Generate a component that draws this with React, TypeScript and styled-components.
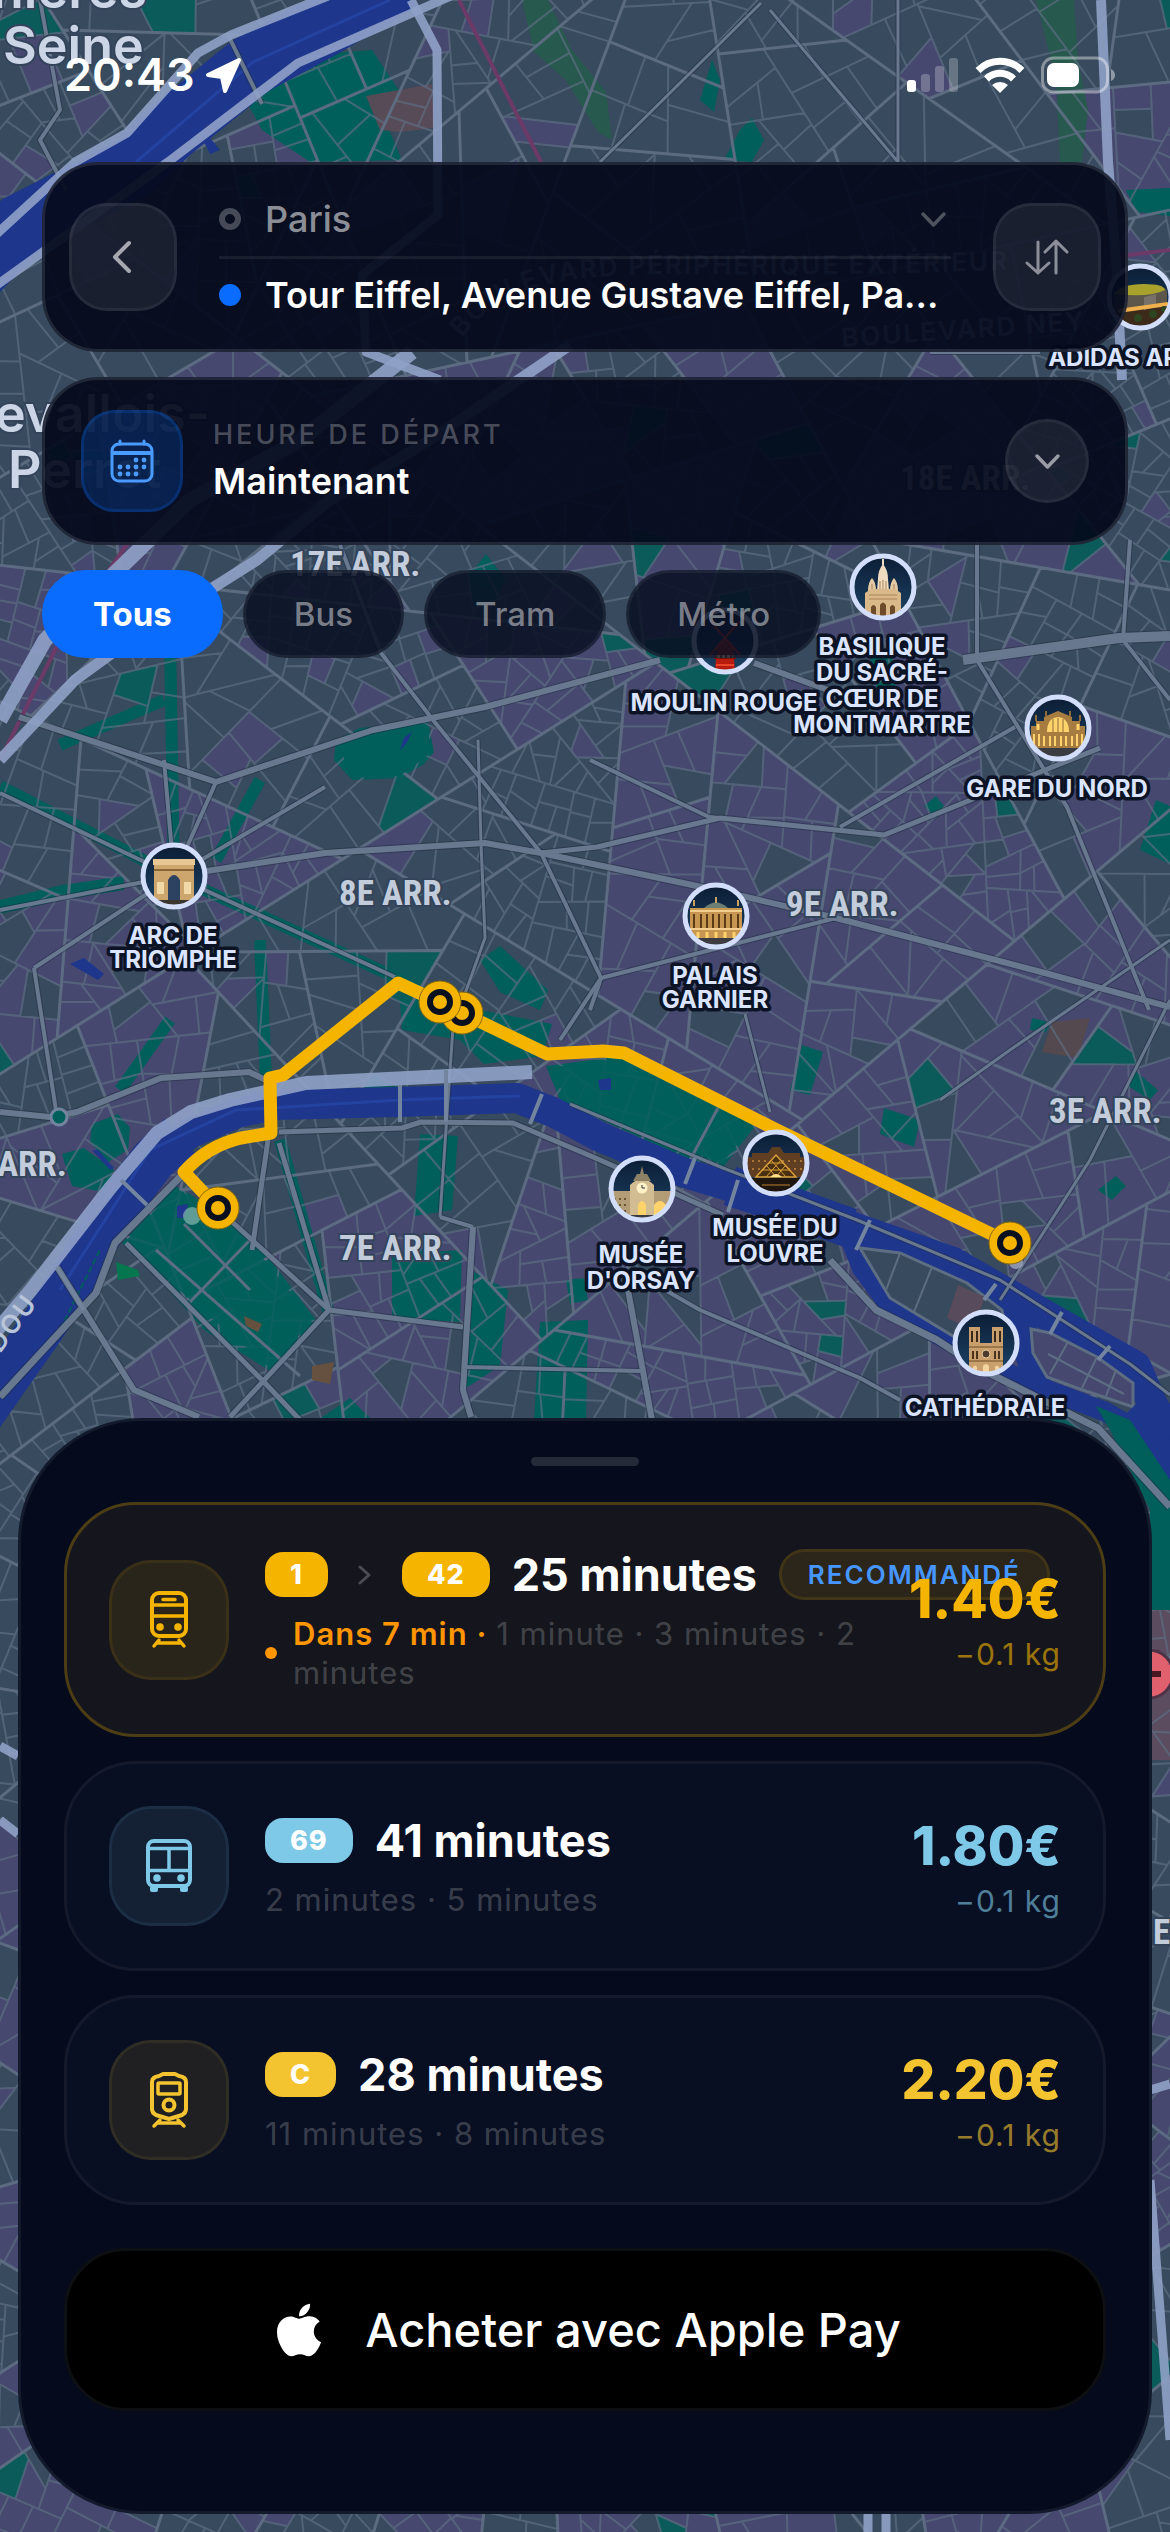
import React, { useState } from "react";
import styled, { createGlobalStyle, css } from "styled-components";
import { FaApple } from "react-icons/fa";

/* ------------------------------------------------------------------ */
/* Theme                                                               */
/* ------------------------------------------------------------------ */

const color = {
  ink: "#050b1c",
  land: "#384a5d",
  quarter: "#464870",
  park: "#015f5b",
  water: "#1e368b",
  street: "#5d6d82",
  avenue: "#73849e",
  express: "#8fa1c6",
  gold: "#f5b400",
  sky: "#7ec8e8",
  amber: "#f4c430",
  orange: "#ff9500",
  blue: "#0a6cff",
};

const GlobalStyle = createGlobalStyle`
  *, *::before, *::after { box-sizing: border-box; }
  body {
    margin: 0;
    background: ${color.land};
    font-family: Inter, "Noto Sans", "Liberation Sans", sans-serif;
    color: #fff;
    -webkit-font-smoothing: antialiased;
  }
  button, input { font: inherit; color: inherit; }
`;

/* ------------------------------------------------------------------ */
/* Street pattern: blocks made by cutting the plane again and again    */
/* ------------------------------------------------------------------ */

type Pt = [number, number];

function makeRandom(seed: number) {
  let a = seed;
  return () => {
    a = (a + 0x6d2b79f5) | 0;
    let t = Math.imul(a ^ (a >>> 15), 1 | a);
    t = (t + Math.imul(t ^ (t >>> 7), 61 | t)) ^ t;
    return ((t ^ (t >>> 14)) >>> 0) / 4294967296;
  };
}

const areaOf = (p: Pt[]) => {
  let s = 0;
  p.forEach(([x, y], i) => {
    const [u, v] = p[(i + 1) % p.length];
    s += x * v - u * y;
  });
  return Math.abs(s / 2);
};

const centreOf = (p: Pt[]): Pt => [
  p.reduce((s, q) => s + q[0], 0) / p.length,
  p.reduce((s, q) => s + q[1], 0) / p.length,
];

function cut(poly: Pt[], at: Pt, nx: number, ny: number): [Pt[], Pt[]] {
  const side = (q: Pt) => (q[0] - at[0]) * nx + (q[1] - at[1]) * ny;
  const a: Pt[] = [];
  const b: Pt[] = [];
  poly.forEach((q, i) => {
    const r = poly[(i + 1) % poly.length];
    const sq = side(q);
    const sr = side(r);
    (sq >= 0 ? a : b).push(q);
    if (sq * sr < 0) {
      const t = sq / (sq - sr);
      const m: Pt = [q[0] + (r[0] - q[0]) * t, q[1] + (r[1] - q[1]) * t];
      a.push(m);
      b.push(m);
    }
  });
  return [a, b];
}

function quarterShare([x, y]: Pt) {
  if (y < 350) return x < 90 ? 0.4 : 0.03;
  if (y < 560) return 0.35;
  if (y < 950) return x > 560 ? 0.42 : 0.38;
  if (y < 1450) return x > 560 ? 0.9 : x < 260 && y < 1080 ? 0.4 : 0.15;
  return 0.35;
}

const ringPath = (p: Pt[]) =>
  "M" + p.map(([x, y]) => `${x.toFixed(1)} ${y.toFixed(1)}`).join("L") + "Z";

function buildStreets() {
  const rnd = makeRandom(75015);
  const quarter: string[] = [];
  const park: string[] = [];
  const minor: string[] = [];
  const middle: string[] = [];

  const visit = (poly: Pt[], limit: number, tone: number) => {
    const area = areaOf(poly);
    const c = centreOf(poly);
    let nextLimit = limit;
    let nextTone = tone;
    if (area < 22000 && tone < 0) {
      nextTone = rnd() < quarterShare(c) ? 1 : 0;
      nextLimit = 650 + rnd() * (c[1] < 400 ? 3600 : 1700);
      middle.push(ringPath(poly));
    }
    if (area < nextLimit) {
      const r = rnd();
      if (r < 0.02) park.push(ringPath(poly));
      else if (nextTone === 1 ? r < 0.88 : r < 0.09) quarter.push(ringPath(poly));
      minor.push(ringPath(poly));
      return;
    }
    let best = 0;
    let dx = 1;
    let dy = 0;
    poly.forEach((q, i) => {
      const s = poly[(i + 1) % poly.length];
      const l = Math.hypot(s[0] - q[0], s[1] - q[1]);
      if (l > best) {
        best = l;
        dx = (s[0] - q[0]) / l;
        dy = (s[1] - q[1]) / l;
      }
    });
    const spread = tone < 0 ? 1.5 : rnd() < 0.22 ? 1.3 : 0.25;
    const turn = (rnd() - 0.5) * spread;
    const nx = dx * Math.cos(turn) - dy * Math.sin(turn);
    const ny = dx * Math.sin(turn) + dy * Math.cos(turn);
    const reach = best * 0.16 * (rnd() - 0.5);
    const [a, b] = cut(poly, [c[0] + dx * reach, c[1] + dy * reach], nx, ny);
    if (a.length < 3 || b.length < 3) return;
    visit(a, nextLimit, nextTone);
    visit(b, nextLimit, nextTone);
  };

  visit([[-40, -40], [1210, -40], [1210, 2572], [-40, 2572]], 1000, -1);
  return {
    quarter: quarter.join(""),
    park: park.join(""),
    minor: minor.join(""),
    middle: middle.join(""),
  };
}

const streets = buildStreets();

/* ------------------------------------------------------------------ */
/* Hand-placed map features                                            */
/* ------------------------------------------------------------------ */

const parks = [
  "M150 128L214 56L262 36L300 40L168 142L134 160Z",
  "M262 78L300 58L345 52L372 50L400 92L384 118L402 160L310 162L262 130L248 104Z",
  "M336 740L360 728L428 722L434 752L424 764L400 778L352 780L334 760Z",
  "M1126 190L1170 188L1170 216L1136 212Z",
  "M0 900L62 885L124 876L124 890L62 900L0 914Z",
  "M92 1124L118 1114L130 1128L128 1150L108 1162L90 1142Z",
  "M62 1154L84 1148L114 1170L104 1192L72 1186Z",
  "M122 1243L176 1186L236 1222L266 1254L316 1320L272 1372L204 1330L160 1280Z",
  "M420 1134L458 1136L452 1210L414 1216Z",
  "M392 1252L424 1252L462 1250L460 1322L392 1318Z",
  "M474 1272L508 1290L500 1366L466 1388Z",
  "M540 1322L588 1320L586 1420L534 1420Z",
  "M400 1000L430 988L480 1010L552 1024L542 1056L484 1064L460 1040L402 1030Z",
  "M546 1066L622 1056L760 1120L724 1166L690 1160L570 1106L560 1100Z",
  "M802 1045L823 1052L810 1095L790 1090Z",
  "M884 1108L920 1120L914 1147L880 1134Z",
  "M1032 1018L1050 1022L1046 1032L1030 1030Z",
  "M1134 1070L1158 1090L1150 1100L1128 1086Z",
  "M1098 1190L1116 1176L1126 1186L1112 1200Z",
  "M480 960L500 946L548 990L540 1010L500 992Z",
  "M566 1280L584 1278L588 1300L570 1304Z",
  "M1140 850L1156 800L1170 806L1170 864Z",
  "M318 1420L350 1398L372 1420Z",
  "M870 655L892 655L896 690L880 706Z",
  "M466 580L486 554L506 580L498 594Z",
  "M924 806L936 796L944 806L936 818Z",
  "M724 160L740 130L752 118L764 140L752 162Z",
  "M700 100L712 60L720 80L714 112Z",
];

const greenAvenues: Pt[][] = [
  [[174, 876], [0, 786]],
  [[174, 876], [395, 977], [484, 1030]],
  [[174, 876], [170, 640]],
  [[260, 780], [216, 860]],
  [[260, 940], [266, 1080]],
  [[170, 1020], [120, 1090]],
  [[164, 700], [60, 745]],
  [[280, 1140], [328, 1310]],
];

const avenues: { w: number; d: string }[] = [
  { w: 7, d: "M19 717L216 782L373 730L485 707L660 660" },
  { w: 7, d: "M754 663L828 690" },
  { w: 11, d: "M963 660L1119 638L1170 636" },
  { w: 5, d: "M340 545L381 653L433 720L541 853L601 978L590 1010" },
  { w: 7, d: "M174 876L325 853L485 843L541 853L716 890L836 918L1045 973L1170 1007" },
  { w: 4, d: "M478 740L481 843L485 938L453 1027L440 1217" },
  { w: 6, d: "M541 853L597 847L720 818L884 835L1045 770L1100 748" },
  { w: 5, d: "M590 760L709 817L720 818" },
  { w: 5, d: "M840 827L1015 727" },
  { w: 5, d: "M977 540L977 660L1067 807L1149 1010" },
  { w: 5, d: "M1130 540L1123 640L1170 700" },
  { w: 5, d: "M174 876L0 793M174 876L0 910M174 876L34 968M174 876L164 760M174 876L216 782M174 876L325 787M174 876L395 977" },
  { w: 5, d: "M836 918L601 978L560 1040" },
  { w: 7, d: "M0 1112L50 1117L77 1112L161 1078L249 1072L272 1083" },
  { w: 5, d: "M34 968L57 1117" },
  { w: 8, d: "M180 1177L115 1243L96 1293L0 1397" },
  { w: 6, d: "M279 1132L402 1128L421 1122L513 1123L600 1160L723 1215" },
  { w: 8, d: "M830 1260L876 1310L937 1340L983 1370L1098 1428L1170 1507" },
  { w: 6, d: "M230 1220L329 1310L463 1327M126 1243L264 1382L300 1420M329 1310L230 1417M279 1143L329 1310M268 1140L252 1250" },
  { w: 7, d: "M473 1227L463 1390L471 1417M57 1267L134 1390L199 1417" },
  { w: 5, d: "M440 1217L473 1227M463 1367L640 1371" },
  { w: 7, d: "M628 1290L652 1420" },
  { w: 5, d: "M630 1270L700 1310L860 1378L900 1400" },
  { w: 4, d: "M745 1014L770 1112M570 1104L723 1168L857 1220L1000 1280L1130 1364L1170 1395" },
  { w: 4, d: "M761 3L600 162M770 10L898 162M898 0L898 162" },
  { w: 4, d: "M1170 940L1010 1050L940 1100M1170 1000L1090 1160L1000 1300" },
  { w: 5, d: "M40 0L60 110L40 140L66 190M1040 352L930 352M228 35L262 104" },
];

const express = [
  { w: 9, d: "M411 0L437 50L438 215L362 275L366 352L440 380" },
  { w: 10, d: "M1101 0L1108 162L1116 260L1122 380" },
  { w: 15, d: "M412 352L300 440L190 500L119 569L45 640L0 720" },
  { w: 11, d: "M570 345L430 440L330 500L257 560L130 640L75 680L0 760" },
  { w: 14, d: "M532 1072L306 1083L230 1100L191 1112L157 1133L111 1187L31 1290L-20 1350" },
  { w: 9, d: "M328 -4L231 35L198 53L127 133L75 162L-10 240" },
  { w: 9, d: "M451 -4L298 63L168 162L-10 290" },
  { w: 9, d: "M0 1746L18 1756M0 1820L18 1834M1150 2090L1170 2084M1150 2180L1170 2440M868 2532L868 2512M886 2532L886 2512" },
];

const route =
  "M218 1208L184 1172Q207 1146 241 1138L271 1133L270 1078L283 1075L398 983L439 1002L462 1013L547 1054L603 1051L624 1053L777 1130L1010 1243";

const stops: Pt[] = [[462, 1013], [440, 1002], [218, 1208], [1010, 1243]];

/* Landmark drawings share a 66 x 66 disc centred on 0 0. */
const stone = "#d9b98a";
const glow = "#ffd36b";

const drawings: Record<string, React.ReactNode> = {
  basilica: (
    <g>
      <path d="M-5 -8Q-5 -17 0 -23Q5 -17 5 -8L6 4H-6Z" fill="#f0dcc0" />
      <path d="M0 -28V-22" stroke="#f0dcc0" strokeWidth="2" />
      <path d="M-15 4Q-15 -5 -11 -9Q-7 -5 -7 4ZM15 4Q15 -5 11 -9Q7 -5 7 4Z" fill="#e4c9a4" />
      <path d="M-18 30V6L-12 2H12L18 6V30Z" fill={stone} />
      <path d="M-3 -6V2M0 -7V2M3 -6V2M-11 -3V2M11 -3V2" stroke="#a98154" strokeWidth="1" />
      <path d="M-3 30V18Q0 13 3 18V30ZM-12 30V20Q-9.500 16 -7 20V30ZM7 30V20Q9.500 16 12 20V30Z" fill="#6d4a2a" />
      <path d="M-14 8H14M-14 12H14" stroke="#a98154" strokeWidth="1" />
    </g>
  ),
  windmill: (
    <g>
      <path d="M-10 30L-8 4Q0 -6 8 4L10 30Z" fill="#b81c0e" />
      <path d="M-11 14H11V18H-11Z" fill="#7a1208" />
      <path d="M-15 -20L15 14M15 -20L-15 14" stroke="#e02b16" strokeWidth="2" />
      <path d="M-8 15.500H8" stroke={glow} strokeWidth="3" strokeDasharray="3 2" />
      <path d="M-9 24H9" stroke="#e8452a" strokeWidth="2" />
    </g>
  ),
  station: (
    <g>
      <path d="M-27 20V-2H-22V-7H-14V-11L0 -17L14 -11V-7H22V-2H27V20Z" fill="#a67c40" />
      <path d="M-11 4Q-11 -10 0 -11Q11 -10 11 4Z" fill={glow} />
      <path d="M0 -10V4M-5 -9V4M5 -9V4" stroke="#8c6a3a" strokeWidth="1" />
      <path d="M-24 18V6M-19 18V6M-14 18V8M-8 18V8M-3 18V8M3 18V8M8 18V8M14 18V8M19 18V6M24 18V6" stroke={glow} strokeWidth="2" />
      <path d="M-20 2V-4M20 2V-4" stroke={glow} strokeWidth="3" />
      <path d="M-22 -7V-13M22 -7V-13M-12 -12V-17M12 -12V-17" stroke="#8c6a3a" strokeWidth="2" />
      <path d="M-33 20H33V33H-33Z" fill="#3a3c42" />
    </g>
  ),
  arch: (
    <g>
      <path d="M-20 24V-12H20V24Z" fill="#cda66d" />
      <path d="M-21 -17H21V-11H-21Z" fill="#e6c794" />
      <path d="M-6 24V4Q0 -6 6 4V24Z" fill="#2c4260" />
      <path d="M-20 -6H20" stroke="#8b6636" strokeWidth="2" />
      <path d="M-17 6H-10V18H-17ZM10 6H17V18H10Z" fill="#f1d9a8" />
      <path d="M-33 24H33V33H-33Z" fill="#3b3630" />
    </g>
  ),
  opera: (
    <g>
      <path d="M-12 -8Q0 -19 12 -8Z" fill="#6b7d74" />
      <path d="M0 -19V-13M-22 -10V-16M22 -10V-16" stroke="#c9a25f" strokeWidth="2" />
      <path d="M-26 -8H26V22H-26Z" fill="#c79650" />
      <path d="M-22 12V-2M-15 12V-2M-9 12V-2M-3 12V-2M3 12V-2M9 12V-2M15 12V-2M22 12V-2" stroke="#5c3b17" strokeWidth="2" />
      <path d="M-26 -5H26M-26 13H26" stroke="#f2cf8e" strokeWidth="2" />
      <path d="M-18 22V16M-9 22V16M0 22V16M9 22V16M18 22V16" stroke={glow} strokeWidth="3" />
      <path d="M-33 22H33V33H-33Z" fill="#3a3c42" />
    </g>
  ),
  orsay: (
    <g>
      <path d="M-31 28V2H31V28Z" fill="#b39d76" />
      <path d="M-12 28V-4Q0 -16 12 -4V28Z" fill="#d2bc92" />
      <path d="M-9 -8H9L5 -15H-5ZM-2 -15L0 -23L2 -15Z" fill="#8d8266" />
      <circle cx="0" cy="-1" r="5.500" fill="#fff1c7" />
      <path d="M0 -4V-1H3" stroke="#333" strokeWidth="1" fill="none" />
      <path d="M-4 28V16Q0 8 4 16V28ZM12 26V16Q18 8 24 16V26Z" fill={glow} />
      <path d="M-28 10H-16M-28 16H-16M-28 22H-16" stroke="#6a5732" strokeWidth="2" strokeDasharray="2 3" />
      <path d="M-33 26H33V33H-33Z" fill="#3a3c42" />
    </g>
  ),
  louvre: (
    <g>
      <path d="M-33 14V-6H-24V-10H-8L-4 -16H4L8 -10H24V-6H33V14Z" fill="#5f3e22" />
      <path d="M-30 -2H30M-30 6H30" stroke="#a8743a" strokeWidth="2" strokeDasharray="2 4" />
      <path d="M-20 14L0 -8L20 14Z" fill="#4a3010" stroke="#d99f38" strokeWidth="1.500" />
      <path d="M-14 7H14M-7 0H7M-10 14L5 -3M0 14L9 3M10 14L-5 -3M0 14L-9 3" stroke="#d99f38" strokeWidth="1" />
      <path d="M-6 14Q0 8 6 14Z" fill="#ffe08a" />
      <path d="M-33 15H33V33H-33Z" fill="#1d150e" />
      <path d="M-14 22H14" stroke="#6e4b1c" strokeWidth="2" />
    </g>
  ),
  cathedral: (
    <g>
      <path d="M-17 30V-16H-6V0H6V-16H17V30Z" fill="#c9a06d" />
      <path d="M-14 -1V-12M-9 -1V-12M9 -1V-12M14 -1V-12" stroke="#38291b" strokeWidth="2" />
      <circle cx="0" cy="11" r="4" fill="#4b3a30" stroke="#e9c995" strokeWidth="1" />
      <path d="M-17 4H17M-17 18H17" stroke="#8d683d" strokeWidth="1.500" />
      <path d="M-13 16V8M-9 16V8M9 16V8M13 16V8" stroke="#4b341f" strokeWidth="2" />
      <path d="M-3 30V23Q0 19 3 23V30ZM-13 30V24Q-11 21 -9 24V30ZM9 30V24Q11 21 13 24V30Z" fill="#f3d59d" />
    </g>
  ),
  arena: (
    <g>
      <path d="M-33 15L33 9V33H-33Z" fill="#3c2a1a" />
      <path d="M-26 -2Q-20 -12 4 -12Q24 -12 27 -6V9L-26 15Z" fill="#5d564a" />
      <path d="M-26 -3Q-20 -13 4 -13Q24 -13 25 -7Q10 1 -26 -3Z" fill="#a8a22c" />
      <path d="M4 0L16 -3V10L4 13Z" fill="#77716a" />
      <path d="M-22 14L28 7" stroke="#f0b04c" strokeWidth="4" />
      <circle cx="-2" cy="21" r="4" fill="#2d4520" />
      <circle cx="13" cy="17" r="4" fill="#2d4520" />
      <circle cx="24" cy="12" r="3" fill="#2d4520" />
    </g>
  ),
};

type Landmark = {
  art: keyof typeof drawings;
  at: Pt;
  lines: string[];
  base: number;
};

const landmarks: Landmark[] = [
  { art: "arena", at: [1140, 297], lines: ["ADIDAS ARENA"], base: 366 },
  { art: "windmill", at: [725, 641], lines: ["MOULIN ROUGE"], base: 711 },
  { art: "basilica", at: [883, 587], lines: ["BASILIQUE", "DU SACRÉ-", "CŒUR DE", "MONTMARTRE"], base: 655 },
  { art: "station", at: [1058, 728], lines: ["GARE DU NORD"], base: 797 },
  { art: "arch", at: [174, 876], lines: ["ARC DE", "TRIOMPHE"], base: 944 },
  { art: "opera", at: [716, 916], lines: ["PALAIS", "GARNIER"], base: 984 },
  { art: "louvre", at: [776, 1163], lines: ["MUSÉE DU", "LOUVRE"], base: 1236 },
  { art: "orsay", at: [642, 1189], lines: ["MUSÉE", "D'ORSAY"], base: 1263 },
  { art: "cathedral", at: [986, 1343], lines: ["CATHÉDRALE"], base: 1416 },
];

const districts: { x: number; y: number; name: string; end?: boolean }[] = [
  { x: 290, y: 576, name: "17E ARR." },
  { x: 900, y: 490, name: "18E ARR." },
  { x: 339, y: 905, name: "8E ARR." },
  { x: 786, y: 916, name: "9E ARR." },
  { x: 339, y: 1260, name: "7E ARR." },
  { x: 1049, y: 1123, name: "3E ARR." },
  { x: 67, y: 1176, name: "ARR.", end: true },
  { x: 1153, y: 1944, name: "E" },
];

const MapCanvas = styled.svg`
  position: absolute;
  inset: 0;
  width: 100%;
  height: 100%;
  z-index: 0;
`;

const District = styled.text`
  font: 700 35px "Liberation Sans Narrow", "Roboto Condensed", Roboto, sans-serif;
  fill: #c2ccdb;
  stroke: #33445a;
  stroke-width: 4px;
  paint-order: stroke;
`;

const Place = styled.text`
  font: 700 24px Inter, sans-serif;
  fill: #dbe5ff;
  stroke: #0c1325;
  stroke-width: 7px;
  stroke-linejoin: round;
  paint-order: stroke;
  text-anchor: middle;
`;

const Town = styled.text`
  font: 600 52px Inter, sans-serif;
  fill: #ccd5e6;
  stroke: #33445a;
  stroke-width: 4px;
  paint-order: stroke;
`;

const RoadName = styled.text`
  font: 600 26px Inter, sans-serif;
  letter-spacing: 2px;
  fill: #b8c4d8;
`;

function CityMap() {
  return (
    <MapCanvas viewBox="0 0 1170 2532" preserveAspectRatio="xMidYMin slice" role="img" aria-label="Plan de Paris">
      <defs>
        <linearGradient id="night" x1="0" y1="0" x2="0" y2="1">
          <stop offset="0" stopColor="#0b1c33" />
          <stop offset="1" stopColor="#1d4468" />
        </linearGradient>
        <clipPath id="disc"><circle r="31" /></clipPath>
        <path id="ring-road" d="M462 338Q490 300 540 286T720 274T1060 268" />
      </defs>

      <rect width="1170" height="2532" fill={color.land} />
      <path d={streets.quarter} fill={color.quarter} />
      <path d={streets.park} fill={color.park} opacity="0.8" />
      {parks.map((d) => <path key={d} d={d} fill={color.park} />)}
      <path d="M522 0L548 0L572 50L606 92L612 140L598 132L566 80L534 52ZM1036 0L1074 0L1078 60L1088 110L1082 162L1060 162L1056 80Z" fill="#28594f" />
      <path d="M366 96L432 84L434 128L400 132L380 130Z" fill="#584b58" />
      <path d="M1052 1022L1090 1018L1078 1058L1042 1052Z" fill="#54494e" />
      <path d="M1150 1600H1170V1760H1150Z" fill="#5b4c60" />
      <g fill="none" stroke={color.park} strokeWidth="12">
        {greenAvenues.map((p, i) => <polyline key={i} points={p.map((q) => q.join(",")).join(" ")} />)}
      </g>
      <path d={streets.minor} fill="none" stroke={color.street} strokeWidth="2" opacity="0.7" />
      <path d={streets.middle} fill="none" stroke={color.street} strokeWidth="3" opacity="0.9" />
      <path d="M124 1243L176 1188L236 1224L312 1320L270 1368Z" fill={color.park} opacity="0.85" />
      <path d="M548 1068L622 1058L756 1120L722 1164L570 1104Z" fill={color.park} opacity="0.9" />
      <path d="M338 742L362 730L426 724L432 752L400 776L352 778Z" fill={color.park} />
      <path d="M156 1250L300 1376M184 1224L250 1290M250 1240L190 1302M690 1160L718 1108" fill="none" stroke={color.street} strokeWidth="3" />
      <path d="M244 1316L262 1324L258 1332L246 1326ZM312 1366L334 1362L330 1384L312 1380Z" fill="#66503f" />
      <path d="M116 1262L138 1270L140 1276L118 1280Z" fill="#06764f" />

      <g fill="none" stroke={color.water} strokeLinejoin="round">
        <path strokeWidth="62" d="M402 -20L317 30L250 66L168 133L136 166L20 225L-40 290" />
        <path strokeWidth="46" d="M-30 1430L40 1330L71 1283L103 1227L153 1160L180 1136" />
        <path strokeWidth="30" d="M150 1162L191 1133L237 1113L275 1105L398 1102L517 1098L555 1113L600 1137L685 1173L761 1196" />
        <path strokeWidth="40" d="M730 1186L761 1196L850 1228" />
        <path strokeWidth="30" d="M850 1226L953 1262L1002 1290L1079 1334L1136 1366L1152 1403L1180 1450" />
        <path strokeWidth="20" d="M846 1228L862 1268L890 1306L937 1334L1021 1380L1106 1412L1180 1456" />
        <path strokeWidth="30" d="M1006 1296L1024 1336L1040 1384" />
      </g>
      <path d="M860 1248L900 1253L967 1283L1002 1310L1010 1352L953 1336L890 1298Z" fill={color.land} stroke={color.street} strokeWidth="3" />
      <path d="M900 1253L886 1290M932 1267L914 1312" stroke={color.street} strokeWidth="2" />
      <path d="M958 1285L985 1297L973 1330L947 1318Z" fill="#584b5c" />
      <path d="M1031 1329L1050 1333L1097 1357L1133 1383L1133 1407L1077 1388L1047 1377L1033 1353Z" fill={color.quarter} stroke={color.street} strokeWidth="3" />
      <path d="M1068 1342L1050 1374M1097 1357L1082 1388M1116 1370L1106 1396M1048 1354L1124 1394" stroke={color.street} strokeWidth="2" />
      <path d="M1120 1420L1150 1390L1170 1440V1490Z" fill={color.water} />
      <path d="M1096 1406L1130 1420L1170 1480V1610H1150V1510L1110 1430Z" fill={color.park} />
      <path d="M0 1395L60 1330L100 1250" fill="none" stroke={color.park} strokeWidth="2" strokeDasharray="6 3" />
      <path d="M390 0L253 62L136 162M60 1290L150 1150L236 1110L400 1100L520 1096" fill="none" stroke="#2443a0" strokeWidth="3" />
      <g fill={color.water}>
        <path d="M70 964L84 958L104 974L98 980ZM404 738L412 732L406 744L400 750ZM598 1080L611 1078V1090H600ZM92 1150L98 1150L114 1168L110 1170ZM177 1206L188 1204L184 1218L177 1218ZM201 136L210 138L220 150L210 154Z" />
      </g>

      <path d="M459 0L541 162M130 540L60 640L0 760M1120 256L1170 250" fill="none" stroke="#6c3a66" strokeWidth="4" />
      <g fill="none" stroke="#202b3d" strokeLinejoin="round">
        {avenues.map((a) => <path key={a.d} d={a.d} strokeWidth={a.w + 1} opacity="0.5" />)}
      </g>
      <g fill="none" stroke="#68798f" strokeLinejoin="round">
        {avenues.map((a) => <path key={a.d} d={a.d} strokeWidth={a.w - 1} />)}
      </g>
      <g fill="none" stroke={color.express} strokeLinejoin="round">
        {express.map((a) => <path key={a.d} d={a.d} strokeWidth={a.w} opacity="0.9" />)}
      </g>
      <path d="M121 1180L147 1205M57 1267L84 1310M400 1085V1122M446 1070V1122M542 1094L530 1124M695 1158L685 1184M738 1180L728 1212M870 1220L856 1250M996 1284L984 1300M1062 1312L1050 1334M1110 1346L1098 1360" fill="none" stroke={color.avenue} strokeWidth="4" />
      <circle cx="59" cy="1117" r="8" fill={color.park} stroke={color.avenue} strokeWidth="3" />

      <g opacity="0.8">
        <RoadName><textPath href="#ring-road">BOULEVARD PÉRIPHÉRIQUE EXTÉRIEUR</textPath></RoadName>
        <RoadName transform="translate(842 347) rotate(-4)">BOULEVARD NEY</RoadName>
      </g>
      <RoadName transform="translate(0 1354) rotate(-53)">DOU</RoadName>

      <Town x="-8" y="8">nières</Town>
      <Town x="3" y="64">Seine</Town>
      <Town x="-5" y="432">evallois-</Town>
      <Town x="8" y="488">Perret</Town>

      {districts.map((d) => (
        <District key={d.name + d.x} x={d.x} y={d.y} textAnchor={d.end ? "end" : "start"}>{d.name}</District>
      ))}

      <circle cx="192" cy="1216" r="9" fill="#9fc4bd" opacity="0.6" />
      <circle cx="1016" cy="1262" r="7" fill="#a9b4c8" opacity="0.7" />
      <path d={route} fill="none" stroke={color.gold} strokeWidth="13" strokeLinejoin="round" />
      {stops.map(([x, y]) => (
        <g key={x}>
          <circle cx={x} cy={y} r="21" fill={color.gold} stroke="#8a6a10" strokeWidth="1" />
          <circle cx={x} cy={y} r="10" fill={color.gold} stroke="#0b1020" strokeWidth="6" />
        </g>
      ))}

      {landmarks.map((m) => (
        <g key={m.art} transform={`translate(${m.at[0]} ${m.at[1]})`}>
          <circle r="33" fill="url(#night)" />
          <g clipPath="url(#disc)">{drawings[m.art]}</g>
          <circle r="31" fill="none" stroke="#d3defb" strokeWidth="5" />
        </g>
      ))}
      {landmarks.map((m) => {
        const step = m.lines.length === 2 && m.base < 1000 ? 24 : 26;
        return (
          <Place key={m.art} y={m.base}>
            {m.lines.map((line, i) => (
              <tspan key={line} x={m.at[0] - 1} y={m.base + i * step}>{line}</tspan>
            ))}
          </Place>
        );
      })}

      <circle cx="1149" cy="1674" r="24" fill="#e0606e" stroke="#4e3246" strokeWidth="3" />
      <path d="M1138 1674H1161" stroke="#4a1620" strokeWidth="6" />
    </MapCanvas>
  );
}

/* ------------------------------------------------------------------ */
/* Interface                                                           */
/* ------------------------------------------------------------------ */

const Screen = styled.main`
  position: relative;
  display: flex;
  flex-direction: column;
  min-height: 100vh;
  overflow: hidden;
`;

const Layer = styled.div`
  position: relative;
  z-index: 1;
  flex: 1;
  display: flex;
  flex-direction: column;
`;

const StatusBar = styled.header`
  display: flex;
  justify-content: space-between;
  align-items: center;
  height: 150px;
  padding: 0 54px 0 64px;
`;

const Clock = styled.div`
  display: flex;
  align-items: center;
  gap: 10px;
  font-size: 45px;
  font-weight: 600;
  line-height: 56px;
`;

const Signals = styled.div`
  display: flex;
  align-items: center;
  gap: 16px;
`;

const SearchStack = styled.section`
  display: flex;
  flex-direction: column;
  gap: 25px;
  padding: 12px 42px 0;
`;

const panel = css`
  border: 3px solid rgba(255, 255, 255, 0.1);
  border-radius: 56px;
  background: rgba(4, 10, 28, 0.93);
`;

const TripPanel = styled.div`
  ${panel}
  display: flex;
  align-items: center;
  gap: 42px;
  padding: 12px 24px;
  height: 190px;
`;

const SquareButton = styled.button`
  flex: none;
  display: grid;
  place-items: center;
  width: 108px;
  height: 108px;
  padding: 0;
  border: 3px solid rgba(255, 255, 255, 0.06);
  border-radius: 38px;
  background: rgba(255, 255, 255, 0.07);
`;

const Fields = styled.div`
  flex: 1;
  min-width: 0;
`;

const field = css`
  display: flex;
  align-items: center;
  gap: 24px;
  width: 100%;
  height: 73px;
  padding: 0;
  border: 0;
  background: none;
  text-align: left;
  font-size: 36px;
`;

const OriginField = styled.button`
  ${field}
  font-weight: 500;
  color: rgba(255, 255, 255, 0.55);

  span { flex: 1; }
  svg { margin-right: 4px; }
`;

const Divider = styled.hr`
  height: 3px;
  margin: 0;
  border: 0;
  background: rgba(255, 255, 255, 0.07);
`;

const DestinationField = styled.label`
  ${field}
  font-weight: 600;
`;

const DestinationInput = styled.input`
  flex: 1;
  min-width: 0;
  padding: 0;
  border: 0;
  outline: 0;
  background: none;
  text-overflow: ellipsis;
`;

const Dot = styled.i<{ $filled?: boolean }>`
  flex: none;
  width: 22px;
  height: 22px;
  border-radius: 50%;
  border: 6px solid ${(p) => (p.$filled ? color.blue : "rgba(255, 255, 255, 0.25)")};
  background: ${(p) => (p.$filled ? color.blue : "none")};
`;

const DeparturePanel = styled.button`
  ${panel}
  display: flex;
  align-items: center;
  gap: 30px;
  width: 100%;
  height: 168px;
  padding: 0 36px;
  text-align: left;
`;

const CalendarTile = styled.span`
  flex: none;
  display: grid;
  place-items: center;
  width: 102px;
  height: 102px;
  border: 3px solid rgba(10, 108, 255, 0.2);
  border-radius: 34px;
  background: rgba(10, 108, 255, 0.2);
`;

const DepartureText = styled.span`
  flex: 1;
  display: grid;
  gap: 4px;
`;

const Overline = styled.span`
  font-size: 27px;
  line-height: 36px;
  font-weight: 500;
  letter-spacing: 3px;
  color: rgba(255, 255, 255, 0.27);
`;

const DepartureValue = styled.span`
  font-size: 36px;
  line-height: 48px;
  font-weight: 600;
`;

const RoundTile = styled.span`
  flex: none;
  display: grid;
  place-items: center;
  width: 84px;
  height: 84px;
  border: 3px solid rgba(255, 255, 255, 0.05);
  border-radius: 50%;
  background: rgba(255, 255, 255, 0.08);
`;

const FilterRow = styled.nav`
  display: flex;
  gap: 20px;
`;

const FilterChip = styled.button<{ $active: boolean }>`
  height: 88px;
  padding: 0 48px;
  border-radius: 44px;
  border: 3px solid ${(p) => (p.$active ? color.blue : "rgba(255, 255, 255, 0.06)")};
  background: ${(p) => (p.$active ? color.blue : "rgba(8, 15, 34, 0.86)")};
  color: ${(p) => (p.$active ? "#fff" : "rgba(255, 255, 255, 0.45)")};
  font-size: 33px;
  font-weight: ${(p) => (p.$active ? 700 : 500)};
`;

const Sheet = styled.section`
  display: flex;
  flex-direction: column;
  margin: auto 18px 18px;
  padding: 36px 43px 100px;
  border: 3px solid #131a2b;
  border-radius: 124px;
  background: ${color.ink};
`;

const Handle = styled.div`
  align-self: center;
  width: 108px;
  height: 9px;
  margin-bottom: 36px;
  border-radius: 5px;
  background: rgba(255, 255, 255, 0.13);
`;

const TripList = styled.div`
  display: flex;
  flex-direction: column;
  gap: 24px;
`;

const TripCard = styled.button<{ $featured?: boolean }>`
  display: flex;
  align-items: center;
  gap: 36px;
  width: 100%;
  padding: 42px;
  border: 3px solid ${(p) => (p.$featured ? "#4d3d14" : "#141a2c")};
  border-radius: 72px;
  background: ${(p) => (p.$featured ? "#15161d" : "#090f22")};
  text-align: left;
`;

const ModeTile = styled.span<{ $tint: string }>`
  flex: none;
  display: grid;
  place-items: center;
  width: 120px;
  height: 120px;
  border: 3px solid ${(p) => p.$tint}2b;
  border-radius: 42px;
  background: ${(p) => p.$tint}19;
  background-clip: padding-box;
  color: ${(p) => p.$tint};
`;

const TripBody = styled.span`
  flex: 1;
  min-width: 0;
  display: flex;
  flex-direction: column;
  gap: 12px;
`;

const TripHeading = styled.span`
  display: flex;
  align-items: center;
  height: 55px;
  gap: 22px;
  white-space: nowrap;
`;

const Lines = styled.span`
  display: flex;
  align-items: center;
  gap: 30px;
`;

const LineBadge = styled.span<{ $tint: string }>`
  height: 45px;
  padding: 0 25px;
  border-radius: 18px;
  background: ${(p) => p.$tint};
  font-size: 27px;
  line-height: 45px;
  font-weight: 800;
  letter-spacing: 1px;
`;

const Duration = styled.strong`
  font-size: 45px;
  line-height: 55px;
  font-weight: 700;
`;

const Recommended = styled.span`
  height: 51px;
  padding: 0 26px;
  border: 3px solid rgba(245, 180, 0, 0.2);
  border-radius: 26px;
  background: rgba(245, 180, 0, 0.1);
  background-clip: padding-box;
  color: #4596ff;
  font-size: 26px;
  line-height: 45px;
  font-weight: 600;
  letter-spacing: 2px;
`;

const TripDetail = styled.span`
  display: flex;
  align-items: center;
  gap: 16px;
  font-size: 31px;
  line-height: 39px;
  letter-spacing: 1px;
  color: rgba(255, 255, 255, 0.21);
`;

const LiveDot = styled.i`
  flex: none;
  width: 12px;
  height: 12px;
  border-radius: 50%;
  background: ${color.orange};
`;

const Live = styled.b`
  font-weight: 600;
  color: ${color.orange};
`;

const PriceColumn = styled.span<{ $tint: string }>`
  position: relative;
  flex: none;
  display: grid;
  gap: 5px;
  justify-items: end;
  color: ${(p) => p.$tint};
`;

const Price = styled.strong`
  font-size: 53px;
  line-height: 64px;
  font-weight: 800;
`;

const Carbon = styled.span`
  font-size: 30px;
  line-height: 36px;
  letter-spacing: 1px;
  opacity: 0.6;
`;

const PayButton = styled.button`
  display: flex;
  align-items: center;
  justify-content: center;
  gap: 36px;
  height: 163px;
  margin-top: 43px;
  border: 3px solid #0e0f12;
  border-radius: 62px;
  background: #000;
  font-size: 47px;
  font-weight: 500;
`;

/* ------------------------------------------------------------------ */
/* Icons                                                               */
/* ------------------------------------------------------------------ */

const ChevronDown = ({ tone }: { tone: string }) => (
  <svg width="27" height="27" viewBox="0 0 27 27" fill="none" stroke={tone} strokeWidth="3.500" strokeLinecap="round" strokeLinejoin="round" aria-hidden="true">
    <path d="M3 8L13.500 19L24 8" />
  </svg>
);

const BackIcon = () => (
  <svg width="36" height="36" viewBox="0 0 36 36" fill="none" stroke="#a5a8b0" strokeWidth="4" strokeLinecap="round" strokeLinejoin="round" aria-hidden="true">
    <path d="M24 4L10 18L24 32" />
  </svg>
);

const SwapIcon = () => (
  <svg width="44" height="40" viewBox="0 0 44 40" fill="none" stroke="#8c8f99" strokeWidth="3" strokeLinecap="round" strokeLinejoin="round" aria-hidden="true">
    <path d="M13 5V36M2 26L13 36L24 26M31 36V4M20 15L31 4L42 15" />
  </svg>
);

const CalendarIcon = () => (
  <svg width="44" height="44" viewBox="0 0 44 44" fill="none" stroke="#4a9bff" strokeWidth="3" strokeLinecap="round" aria-hidden="true">
    <rect x="2" y="5" width="40" height="37" rx="7" />
    <path d="M3 14H41" strokeWidth="4" />
    <path d="M10 2V5M34 2V5" />
    <g fill="#4a9bff" stroke="none">
      {[[26, 21], [34, 21], [10, 28], [18, 28], [26, 28], [34, 28], [10, 35], [18, 35], [26, 35]].map(([x, y]) => (
        <circle key={`${x}-${y}`} cx={x} cy={y} r="2.400" />
      ))}
    </g>
  </svg>
);

const LocationIcon = () => (
  <svg width="37" height="37" viewBox="0 0 37 37" fill="#fff" stroke="#fff" strokeWidth="4" strokeLinejoin="round" aria-hidden="true">
    <path d="M34 3L3 18L17 20L20 34Z" />
  </svg>
);

const CellIcon = () => (
  <svg width="52" height="36" viewBox="0 0 52 36" aria-label="Réseau faible">
    <rect x="0" y="23" width="9" height="12" rx="3" fill="#fff" />
    <g fill="#fff" opacity="0.24">
      <rect x="14" y="17" width="9" height="18" rx="3" />
      <rect x="28" y="9" width="9" height="26" rx="3" />
      <rect x="42" y="1" width="9" height="34" rx="3" />
    </g>
  </svg>
);

const WifiIcon = () => (
  <svg width="50" height="36" viewBox="0 0 50 36" aria-label="Wi-Fi">
    <g fill="none" stroke="#fff" strokeWidth="7">
      <path d="M3 13.500A31 31 0 0 1 47 13.500" />
      <path d="M11.500 22A19 19 0 0 1 38.500 22" />
    </g>
    <path d="M25 36L17 28A12 12 0 0 1 33 28Z" fill="#fff" />
  </svg>
);

const BatteryIcon = () => (
  <svg width="75" height="38" viewBox="0 0 75 38" aria-label="Batterie à moitié pleine">
    <rect x="1.500" y="2" width="65" height="34" rx="11" fill="none" stroke="#fff" strokeOpacity="0.4" strokeWidth="3" />
    <path d="M70 13Q74 15 74 19T70 25Z" fill="#fff" fillOpacity="0.45" />
    <rect x="6" y="7" width="32" height="24" rx="7" fill="#fff" />
  </svg>
);

const MetroIcon = () => (
  <svg width="40" height="58" viewBox="0 0 40 58" fill="none" stroke="currentColor" strokeWidth="4" strokeLinecap="round" strokeLinejoin="round" aria-hidden="true">
    <rect x="3" y="2" width="34" height="43" rx="7" />
    <path d="M14 8.500H26M3 14H37M3 25H37" strokeWidth="3.500" />
    <circle cx="11" cy="36" r="3.800" fill="currentColor" stroke="none" />
    <circle cx="29" cy="36" r="3.800" fill="currentColor" stroke="none" />
    <path d="M10 49L5 55M30 49L35 55M8 52H32" strokeWidth="3.500" />
  </svg>
);

const BusIcon = () => (
  <svg width="48" height="54" viewBox="0 0 48 54" fill="none" stroke="currentColor" strokeWidth="4" strokeLinecap="round" strokeLinejoin="round" aria-hidden="true">
    <rect x="3" y="2" width="42" height="45" rx="6" />
    <path d="M4 9.500H44M4 31.500H44M24 10V31" strokeWidth="3.500" />
    <circle cx="12" cy="39" r="3.800" fill="currentColor" stroke="none" />
    <circle cx="36" cy="39" r="3.800" fill="currentColor" stroke="none" />
    <path d="M7 49H11V51H7ZM37 49H41V51H37Z" />
  </svg>
);

const RerIcon = () => (
  <svg width="40" height="58" viewBox="0 0 40 58" fill="none" stroke="currentColor" strokeWidth="4" strokeLinecap="round" strokeLinejoin="round" aria-hidden="true">
    <path d="M14 3H26L30 5Q37 6 37 11V38Q37 42 33 44L20 48L7 44Q3 42 3 38V11Q3 6 10 5Z" />
    <rect x="9" y="12" width="22" height="11" rx="1" strokeWidth="3.500" />
    <circle cx="20" cy="34" r="5.500" strokeWidth="4" />
    <path d="M11 49L5 55M29 49L35 55M8 52H32" strokeWidth="3.500" />
  </svg>
);

const StepIcon = () => (
  <svg width="14" height="20" viewBox="0 0 14 20" fill="none" stroke="#4b4c52" strokeWidth="3" strokeLinecap="round" strokeLinejoin="round" aria-hidden="true">
    <path d="M2 2L11 10L2 18" />
  </svg>
);

/* ------------------------------------------------------------------ */
/* Data                                                                */
/* ------------------------------------------------------------------ */

const filters = ["Tous", "Bus", "Tram", "Métro"];

const trips = [
  {
    id: "metro",
    icon: <MetroIcon />,
    tint: color.gold,
    lines: ["1", "42"],
    duration: "25 minutes",
    live: "Dans 7 min ·",
    detail: "1 minute · 3 minutes · 2 minutes",
    price: "1.40€",
    carbon: "−0.1 kg",
    featured: true,
  },
  {
    id: "bus",
    icon: <BusIcon />,
    tint: color.sky,
    lines: ["69"],
    duration: "41 minutes",
    detail: "2 minutes · 5 minutes",
    price: "1.80€",
    carbon: "−0.1 kg",
  },
  {
    id: "rer",
    icon: <RerIcon />,
    tint: color.amber,
    lines: ["C"],
    duration: "28 minutes",
    detail: "11 minutes · 8 minutes",
    price: "2.20€",
    carbon: "−0.1 kg",
  },
];

export default function App() {
  const [filter, setFilter] = useState("Tous");
  const [destination, setDestination] = useState("Tour Eiffel, Avenue Gustave Eiffel, Pa...");

  return (
    <Screen>
      <GlobalStyle />
      <CityMap />
      <Layer>
        <StatusBar>
          <Clock>20:43 <LocationIcon /></Clock>
          <Signals><CellIcon /><WifiIcon /><BatteryIcon /></Signals>
        </StatusBar>

        <SearchStack>
          <TripPanel>
            <SquareButton aria-label="Retour"><BackIcon /></SquareButton>
            <Fields>
              <OriginField>
                <Dot />
                <span>Paris</span>
                <ChevronDown tone="#50545f" />
              </OriginField>
              <Divider />
              <DestinationField>
                <Dot $filled />
                <DestinationInput
                  aria-label="Destination"
                  value={destination}
                  onChange={(e) => setDestination(e.target.value)}
                />
              </DestinationField>
            </Fields>
            <SquareButton aria-label="Inverser le trajet"><SwapIcon /></SquareButton>
          </TripPanel>

          <DeparturePanel>
            <CalendarTile><CalendarIcon /></CalendarTile>
            <DepartureText>
              <Overline>HEURE DE DÉPART</Overline>
              <DepartureValue>Maintenant</DepartureValue>
            </DepartureText>
            <RoundTile><ChevronDown tone="#9a9da6" /></RoundTile>
          </DeparturePanel>

          <FilterRow aria-label="Modes de transport">
            {filters.map((name) => (
              <FilterChip key={name} $active={name === filter} onClick={() => setFilter(name)}>
                {name}
              </FilterChip>
            ))}
          </FilterRow>
        </SearchStack>

        <Sheet>
          <Handle />
          <TripList>
            {trips.map((t) => (
              <TripCard key={t.id} $featured={t.featured}>
                <ModeTile $tint={t.tint}>{t.icon}</ModeTile>
                <TripBody>
                  <TripHeading>
                    <Lines>
                      {t.lines.map((line, i) => (
                        <React.Fragment key={line}>
                          {i > 0 && <StepIcon />}
                          <LineBadge $tint={t.tint}>{line}</LineBadge>
                        </React.Fragment>
                      ))}
                    </Lines>
                    <Duration>{t.duration}</Duration>
                    {t.featured && <Recommended>RECOMMANDÉ</Recommended>}
                  </TripHeading>
                  <TripDetail>
                    {t.live && <LiveDot />}
                    <span>{t.live && <Live>{t.live} </Live>}{t.detail}</span>
                  </TripDetail>
                </TripBody>
                <PriceColumn $tint={t.tint}>
                  <Price>{t.price}</Price>
                  <Carbon>{t.carbon}</Carbon>
                </PriceColumn>
              </TripCard>
            ))}
          </TripList>
          <PayButton>
            <FaApple size={60} aria-hidden="true" />
            Acheter avec Apple Pay
          </PayButton>
        </Sheet>
      </Layer>
    </Screen>
  );
}
